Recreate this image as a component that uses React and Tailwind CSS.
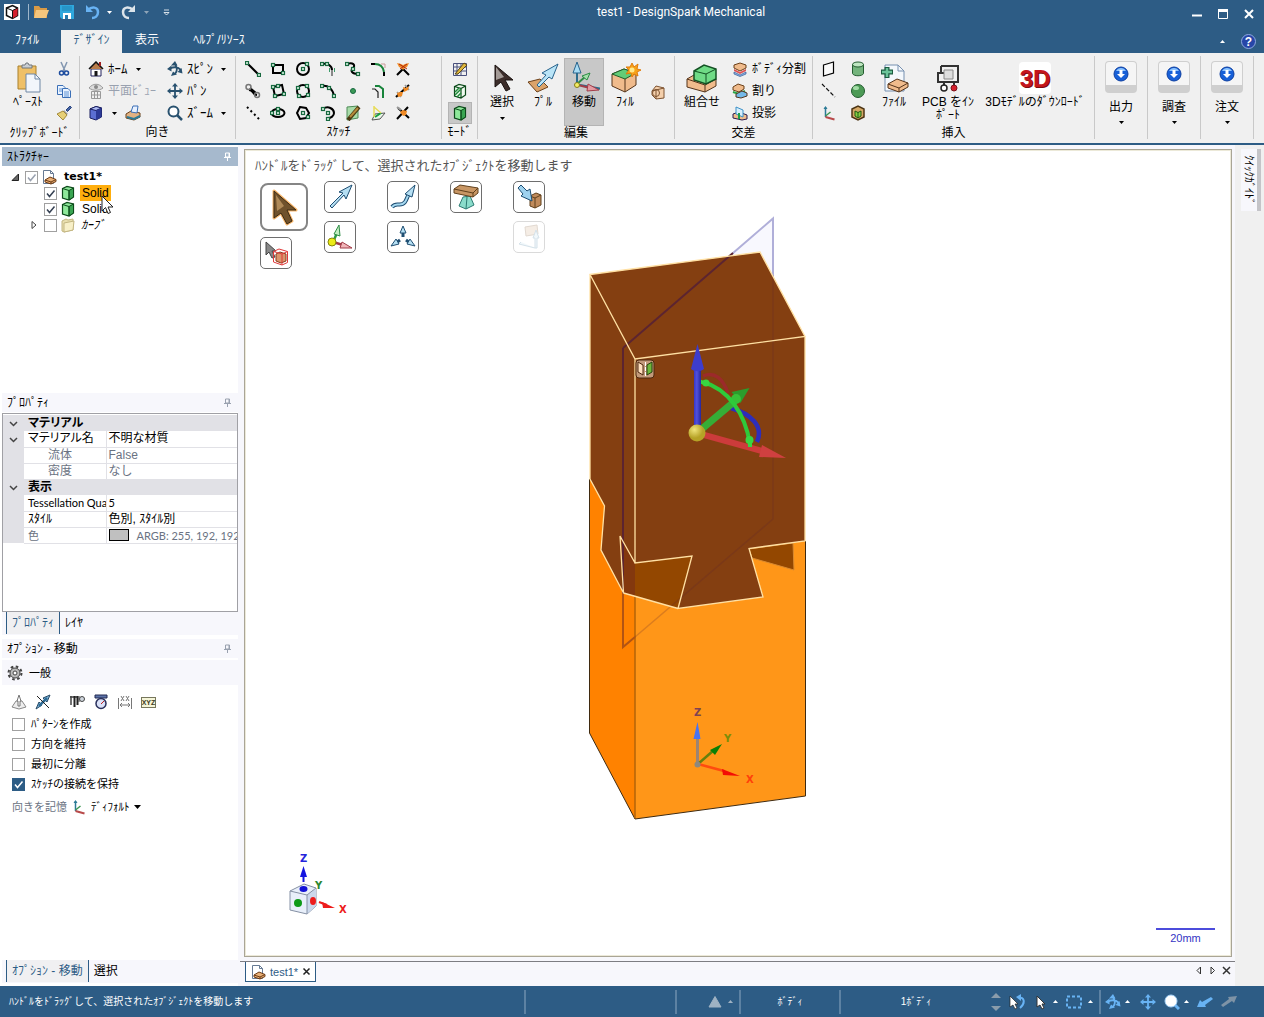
import { useState } from "react";

function Icon({ size = 16, className = "", children }) {
    return (
        <svg width={size} height={size} viewBox={`0 0 ${size} ${size}`} className={`shrink-0 ${className}`} fill="none" aria-hidden="true">
            {children}
        </svg>
    );
}

function Caret({ up, className = "" }) {
    return (
        <svg width="5" height="3" viewBox="0 0 5 3" className={`shrink-0 ${className}`} fill="currentColor" aria-hidden="true">
            <path d={up ? "M0 3h5L2.5 0z" : "M0 0h5L2.5 3z"}/>
        </svg>
    );
}

// green grip square used by the sketch icons
function Grips({ points }) {
    return points.map(([x, y]) => (
        <rect key={`${x}-${y}`} x={x - 1.5} y={y - 1.5} width="3" height="3" fill="#d8f0e0" stroke="#17693f" strokeWidth="1.2"/>
    ));
}

function CubeIcon({ className }) {
    return (
        <Icon className={className}>
            <path d="M2.5 3.500 7 1.500l6.500 1.500v9L9 15l-6.500-2z" fill="#8ee89a" stroke="#0c4a1a" strokeWidth="1.2"/>
            <path d="M9 5.500 13.500 3v9L9 15z" fill="#3aa552" stroke="#0c4a1a"/>
            <path d="M2.500 3.500 9 5.500V15" stroke="#0c4a1a"/>
        </Icon>
    );
}

function FileIcon() {
    return (
        <Icon>
            <path d="M2.500 1.500h7l3 3v10h-10z" fill="#fff" stroke="#667a94"/>
            <path d="M9.500 1.500v3h3" stroke="#667a94"/>
            <path d="m4 11 5-3 6 2.500v2L10 15l-6-2z" fill="#e9b077" stroke="#6b3a14"/>
            <path d="m4 11 6 2 5-2.500M10 13v2" stroke="#6b3a14"/>
        </Icon>
    );
}

function SpinPaths({ color }) {
    return (
        <>
            <path d="M3 7.500c4-2 8-1.500 11 1.500M8 3c2.500 3.500 2.500 7 0 10" stroke={color} strokeWidth="1.8"/>
            <path d="M4 4.500 8 0l2.500 4.500zM0 8l4.500-3.500v6zM15.500 12.500l-5-1.500 4-4zM4 15l2-4.500 4 3z" fill={color}/>
        </>
    );
}

function MovePaths({ color }) {
    return (
        <>
            <path d="M8 2v12M2 8h12" stroke={color} strokeWidth="1.8"/>
            <path d="M8 0 5 3.500h6zM8 16l-3-3.500h6zM0 8l3.500-3v6zM16 8l-3.500-3v6z" fill={color}/>
        </>
    );
}

function AxesIcon() {
    return (
        <Icon>
            <path d="M4.500 12V2" stroke="#2b7a96" strokeWidth="1.5"/>
            <path d="m4.500 11 5-4" stroke="#3b9651" strokeWidth="1.5"/>
            <path d="m4.500 12 9 2.500" stroke="#b84a4a" strokeWidth="2"/>
            <path d="M2.500 4 4.500 1l2 3z" fill="#2b7a96"/>
        </Icon>
    );
}

const sketchTools = [
    { name: "線", art: <><path d="m2 2 11 11" stroke="#000" strokeWidth="2"/><Grips points={[[2, 2], [14, 14]]}/></> },
    { name: "長方形", art: <><path d="M3 4h10v8H3z" stroke="#000" strokeWidth="2"/><Grips points={[[3, 4], [13, 12]]}/></> },
    { name: "円", art: <><circle cx="8" cy="8" r="6" stroke="#000" strokeWidth="2"/><Grips points={[[8, 8], [12, 3]]}/></> },
    { name: "接円弧", art: <><path d="M2 3c6-1 10 2 10 6" stroke="#000" strokeWidth="2"/><path d="M12 9v6" stroke="#888" strokeWidth="2"/><path d="M9.500 7v4M14.500 7v4" stroke="#3a9a68"/><Grips points={[[2, 3], [7, 3]]}/></> },
    { name: "スプライン", art: <><path d="M2 3c6-2 9 1 6 4s-1 6 5 6" stroke="#000" strokeWidth="2"/><Grips points={[[2, 3], [8, 8], [13, 13]]}/></> },
    { name: "角を丸くする", art: <><path d="M1 3h4M14 11v4" stroke="#000" strokeWidth="2"/><path d="M5 3c5 0 8 2 9 8" stroke="#18843b" strokeWidth="2"/><path d="M11 3h4v4" stroke="#c99"/></> },
    { name: "トリム", art: <><path d="M2 14 8 8l6 6" stroke="#000" strokeWidth="2"/><path d="m2 2 4 1 2 1 2-1 4-1-2 4-2 1-2 2-2-2-2-1z" fill="#f08a24"/><path d="m4 3 8 5M12 3 5 8" stroke="#b02a10"/></> },
    { name: "接線", art: <><path d="M4 7c5 0 2 4 8 5" stroke="#000" strokeWidth="2"/><path d="m5 5 6 5" stroke="#000" strokeWidth="2"/><circle cx="3.5" cy="4" r="2.5" stroke="#777" strokeWidth="1.5"/><circle cx="12" cy="12" r="2.5" stroke="#777" strokeWidth="1.5"/></> },
    { name: "3点長方形", art: <><path d="m3 4 9-2 2 9-9 2z" stroke="#000" strokeWidth="2"/><Grips points={[[3, 4], [8, 3], [5, 13], [14, 11]]}/></> },
    { name: "3点円", art: <><circle cx="8" cy="8" r="6" stroke="#000" strokeWidth="2"/><Grips points={[[3, 5], [12, 3], [4, 13], [13, 12]]}/></> },
    { name: "3点円弧", art: <><path d="M2 3c6-1 11 3 12 10" stroke="#000" strokeWidth="2"/><Grips points={[[2, 3], [9, 5], [14, 13]]}/></> },
    { name: "点", art: <circle cx="8" cy="8" r="2.5" fill="#3c9a56" stroke="#17693f"/> },
    { name: "オフセット", art: <><path d="M2 6h3l3 3v6" stroke="#222" strokeWidth="1.2"/><path d="M5 3h4l4 3v9" stroke="#18843b" strokeWidth="2"/></> },
    { name: "分割", art: <><path d="m1 14 13-12" stroke="#000" strokeWidth="2"/><path d="m10 2 4 5M2 9l4 5" stroke="#999" strokeWidth="1.5"/><path d="m8 4 3 1 3-2-1 4-4 2zM2 10l3-1h3l-1 4-4 1z" fill="#f08a24"/></> },
    { name: "補助線", art: <path d="m2 2 12 12" stroke="#000" strokeWidth="2" strokeDasharray="2 3"/> },
    { name: "楕円", art: <><ellipse cx="8" cy="8" rx="6.5" ry="4" stroke="#000" strokeWidth="2"/><Grips points={[[8, 8], [8, 4], [2, 8]]}/></> },
    { name: "多角形", art: <><path d="m5 2 6 1 3 5-3 5-6 1-3-6z" stroke="#000" strokeWidth="2"/><Grips points={[[8, 8], [13, 12]]}/></> },
    { name: "スイープ円弧", art: <><path d="M3 4c5-4 11 0 11 4 0 3-3 5-6 5" stroke="#000" strokeWidth="2"/><Grips points={[[3, 4], [8, 8], [8, 14]]}/></> },
    { name: "面カーブ", art: <><path d="m2 2 11-1v12L2 15z" fill="#a8dba8" stroke="#4f8c58"/><path d="M3 15 14 2" stroke="#4a3a12" strokeWidth="4"/><path d="M5 12 13 3" stroke="#b58a3a" strokeWidth="2"/></> },
    { name: "投影", art: <><path d="M5 9 15 8l-5 6-8 1z" fill="#eaf6ea" stroke="#555"/><path d="m5 12 6-4" stroke="#18a040" strokeWidth="2"/><path d="M4 1v11M4 2l7 6" stroke="#e8dc58" strokeWidth="1.5"/></> },
    { name: "曲げ", art: <><path d="m3 3 11 10M2 14 13 2" stroke="#000" strokeWidth="2"/><path d="m2 2 4 3" stroke="#999" strokeWidth="2"/><path d="m5 7 3-2 4 1-1 4-3 1z" fill="#f08a24"/></> }
];

function MenuButton({ icon, label, caret, disabled, size = "text-[13px]" }) {
    return (
        <button disabled={disabled} className={`flex h-[22px] items-center gap-1 whitespace-nowrap leading-4 disabled:text-gray-400 ${size}`}>
            {icon}
            <span>{label}</span>
            {caret && <Caret className="ml-1"/>}
        </button>
    );
}

function BigButton({ icon, label, caret, active, className = "w-10" }) {
    return (
        <button className={`flex h-[68px] flex-col items-center pt-1 text-[12px] leading-[13px] ${active ? "bg-[#c8c8c8] outline outline-[#b4b4b4] -outline-offset-1" : ""} ${className}`}>
            <span className="flex h-8 items-center">{icon}</span>
            <span className="mt-0.5">{label}</span>
            {caret && <Caret className="mt-2"/>}
        </button>
    );
}

function Group({ label, className = "", children }) {
    return (
        <section className={`flex shrink-0 flex-col border-r border-[#c9c9c9] ${className}`}>
            <div className="flex flex-1 items-start pt-0.5">{children}</div>
            <h2 className="text-center text-[12px] leading-[14px]">{label}</h2>
        </section>
    );
}

function TitleBar() {
    return (
        <header className="flex h-7 items-center bg-[#2d5c85] pb-1 text-white">
            <div className="flex flex-1 items-center gap-2 pl-1">
                <Icon className="bg-white">
                    <path d="m2.500 4 6-2.500 5 2.500v7.500l-5 3-6-3z" fill="#fff" stroke="#111" strokeWidth="1.5"/>
                    <path d="m8.500 6.500 5-2.500v7.500l-5 3z" fill="#d5202c"/>
                    <path d="m2.500 4 6 2.500 5-2.500M8.500 6.500v8" stroke="#111"/>
                </Icon>
                <span className="h-4 w-px bg-[#9fb6ca]"></span>
                <button aria-label="開く" className="-ml-1"><Icon>
                    <path d="M1 2h5l1.500 2H14v10H1z" fill="#d99a45"/><path d="M3 6h13l-3 8H1z" fill="#f5c67d"/>
                </Icon></button>
                <button aria-label="保存" className="ml-0.5"><Icon>
                    <path d="M1 1h14v14H3l-2-2z" fill="#2ea7dd"/><path d="M4 9h8v6H4z" fill="#fff"/><path d="M6 11h3v4H6z" fill="#2279ad"/><path d="M3 2h10v5H3z" fill="#2796c9"/>
                </Icon></button>
                <button aria-label="元に戻す" className="flex items-center gap-1.5"><Icon className="ml-0.5">
                    <path d="M3 6c4-4 10-3 10 2 0 4-3 6-6 6" stroke="#68b3f4" strokeWidth="2.5"/><path d="M1 1v7h7z" fill="#68b3f4"/>
                </Icon><Caret/></button>
                <button aria-label="やり直し" className="flex items-center gap-2"><Icon>
                    <path d="M13 6C9 2 3 3 3 8c0 4 3 6 6 6" stroke="#dce4ea" strokeWidth="2.5"/><path d="M15 1v7H8z" fill="#dce4ea"/>
                </Icon><Caret className="text-[#8fa5b8]"/></button>
                <button aria-label="クイックアクセス" className="ml-1.5"><Icon size={7}><path d="M1 1h5M1 3.500h5L3.500 6z" stroke="#fff" strokeWidth=".8"/></Icon></button>
            </div>
            <h1 className="pl-[104px] text-center font-['Roboto',sans-serif] text-[12px] leading-4">test1 - DesignSpark Mechanical</h1>
            <div className="flex flex-1 items-center justify-end gap-4 pr-[10px] pt-1">
                <button aria-label="最小化"><Icon size={10}><path d="M0 6.500h10" stroke="#fff" strokeWidth="2"/></Icon></button>
                <button aria-label="最大化"><Icon size={10}><path d="M.5 1v8.500h9V1" stroke="#fff"/><path d="M0 1.500h10" stroke="#fff" strokeWidth="3"/></Icon></button>
                <button aria-label="閉じる"><Icon size={10}><path d="m1 1 8 8M9 1 1 9" stroke="#fff" strokeWidth="2"/></Icon></button>
            </div>
        </header>
    );
}

function RibbonTabs() {
    const tabs = [
        { label: "ﾌｧｲﾙ", width: "w-[54px]" },
        { label: "ﾃﾞｻﾞｲﾝ", width: "w-[61px] ml-[7px]", active: true },
        { label: "表示", width: "w-[50px]" },
        { label: "ﾍﾙﾌﾟ/ﾘｿｰｽ", width: "w-[94px]" }
    ];

    return (
        <nav className="flex h-[25px] items-end bg-[#2d5c85] text-[12px] leading-4 text-white">
            {tabs.map(tab => (
                <button key={tab.label} className={`h-[23px] whitespace-nowrap pb-1 ${tab.width} ${tab.active ? "bg-[#f0f0f0] text-[#2d5c85]" : ""}`}>{tab.label}</button>
            ))}
            <div className="ml-auto flex items-center gap-4 pb-1 pr-2">
                <button aria-label="リボンを最小化"><Caret up/></button>
                <button aria-label="ヘルプ" className="flex h-[15px] w-[15px] items-center justify-center rounded-full border border-[#8fa9e0] bg-[#2746a8] text-[12px] font-bold leading-3">?</button>
            </div>
        </nav>
    );
}

function OutputGroup({ label }) {
    return (
        <button className="flex w-[53px] shrink-0 flex-col items-center border-r border-[#c9c9c9] pt-[5px] text-[12px] leading-4">
            <span className="flex h-8 w-8 justify-center rounded border border-[#cfcfcf] border-b-8 bg-[#f5f5f5] pt-1">
                <Icon>
                    <circle cx="8" cy="8" r="7" fill="#1760d8" stroke="#0c3ea0"/>
                    <path d="M3 5c2-4 8-4 10 0z" fill="#8ec5ff"/>
                    <path d="M6.500 4h3v4H12l-4 4-4-4h2.500z" fill="#fff"/>
                </Icon>
            </span>
            <span className="mt-1.5">{label}</span>
            <Caret className="mt-1.5"/>
        </button>
    );
}

function Ribbon() {
    return (
        <div className="flex h-[92px] overflow-hidden border-b-2 border-[#2d5c85] bg-[#f0f0f0] pb-1 pt-[3px]">
            <Group label="ｸﾘｯﾌﾟﾎﾞｰﾄﾞ" className="w-20">
                <BigButton className="ml-2 w-10" label="ﾍﾟｰｽﾄ" icon={
                    <Icon size={32}>
                        <path d="M6 4h18v23H6z" fill="#efc067" stroke="#a9802d"/>
                        <path d="M10 6V3h3l1-2h2l1 2h3v3z" fill="#c8cdd2" stroke="#71767c"/>
                        <path d="M14 12h9l5 5v13H14z" fill="#f2f6fb" stroke="#6f87a4"/>
                        <path d="M23 12v5h5" stroke="#6f87a4"/>
                    </Icon>
                }/>
                <div className="ml-2 flex flex-col">
                    <button aria-label="切り取り" className="flex h-[22px] items-center"><Icon><path d="M5 1l4 9M11 1 7 10" stroke="#8296b0" strokeWidth="1.5"/><circle cx="5.5" cy="12" r="2" stroke="#1b4b9e" strokeWidth="1.5"/><circle cx="10.5" cy="12" r="2" stroke="#1b4b9e" strokeWidth="1.5"/></Icon></button>
                    <button aria-label="コピー" className="flex h-[22px] items-center"><Icon><path d="M1.500 2.500H7l2 2v7H1.500z" fill="#eaf3ff" stroke="#3b6fb6"/><path d="M6.500 5.500H12l2.500 2.500v6.500h-8z" fill="#eaf3ff" stroke="#3b6fb6"/><path d="M8 9h5M8 11h5M8 13h5M3 6h3M3 8h3" stroke="#5c92d4"/></Icon></button>
                    <button aria-label="書式のコピー" className="flex h-[22px] items-center"><Icon><path d="m10 5 4-4 1.500 1.500-4 4z" fill="#4565a5" stroke="#2a437c"/><path d="m8 5 4 4-2 1-3-3z" fill="#999"/><path d="m7 6 4 4-4 5-6-6z" fill="#e6cf77" stroke="#a38a3a"/></Icon></button>
                </div>
            </Group>

            <Group label="向き" className="w-[156px]">
                <div className="ml-2 w-[79px]">
                    <MenuButton label="ﾎｰﾑ" caret icon={<Icon><path d="M3 8h10v7H3z" fill="#fff" stroke="#20205c"/><path d="m1 8 7-7 7 7" fill="#b97c4a" stroke="#111" strokeWidth="1.5"/><path d="M6.500 10h3v5h-3z" fill="#161616"/><path d="M12 1v4" stroke="#a02020" strokeWidth="2"/></Icon>}/>
                    <MenuButton label="平面ﾋﾞｭｰ" size="text-[12px]" disabled icon={<Icon><path d="M1 5c4-5 10-5 14 0-4 3-10 3-14 0z" fill="#ddd" stroke="#999"/><circle cx="8" cy="4" r="2" fill="#888"/><path d="M3.500 8.500h9v7h-9zM3.500 12h9M6.500 8.500v7M9.500 8.500v7" stroke="#999"/></Icon>}/>
                    <div className="flex h-[22px] items-center gap-2">
                        <button className="flex items-center gap-2" aria-label="ビュー">
                            <Icon><path d="m2 4 6-2.500L13.500 3v9L8 15l-6-2z" fill="#5b6fd2" stroke="#1a1f5e"/><path d="m2 4 6 1.500L13.500 3 8 1.500z" fill="#aebcf5" stroke="#1a1f5e"/><path d="m8 5.500 5.500-2.500v9L8 15z" fill="#2c3a96"/></Icon>
                            <Caret/>
                        </button>
                        <button aria-label="面ビュー"><Icon><path d="m1 9 5-3 9 2v4l-6 3-8-2z" fill="#e3b282" stroke="#6b4019"/><path d="M8 1h5l-1 7-6-1z" fill="#e6f0ff" stroke="#3b6fb6"/><path d="m2 12 7 2 6-3" stroke="#2b7a96" strokeWidth="2"/></Icon></button>
                    </div>
                </div>
                <div>
                    <MenuButton label="ｽﾋﾟﾝ" caret icon={<Icon><SpinPaths color="#28516f"/></Icon>}/>
                    <MenuButton label="ﾊﾟﾝ" icon={<Icon><MovePaths color="#28516f"/></Icon>}/>
                    <MenuButton label="ｽﾞｰﾑ" caret icon={<Icon><circle cx="6.5" cy="6.5" r="5" fill="#fff" stroke="#28516f" strokeWidth="2"/><path d="m10 10 5 5" stroke="#28516f" strokeWidth="2.5"/></Icon>}/>
                </div>
            </Group>

            <Group label="ｽｹｯﾁ" className="w-[206px]">
                <div className="ml-1 grid grid-cols-7">
                    {sketchTools.map(tool => (
                        <button key={tool.name} aria-label={tool.name} className="flex h-[22px] w-[25px] items-center justify-center"><Icon>{tool.art}</Icon></button>
                    ))}
                </div>
            </Group>

            <Group label="ﾓｰﾄﾞ" className="w-9">
                <div className="mx-auto flex flex-col">
                    <button aria-label="スケッチモード" className="flex h-[22px] w-6 items-center justify-center"><Icon><path d="M1.500 2.500h13v12h-13zM1.500 6h13M1.500 10h13M5 2.500v12M9 2.500v12" stroke="#49507c"/><path d="m3 13 9-11 3 2-9 9z" fill="#e0b73d" stroke="#5b4a1a"/></Icon></button>
                    <button aria-label="断面モード" className="flex h-[22px] w-6 items-center justify-center"><Icon><path d="M2.500 3.500 7 1.500l6.500 1.500v9L9 15l-6.500-2zM2.500 3.500 9 5.500V15M9 5.500 13.500 3" fill="#effaef" stroke="#0c4a1a" strokeWidth="1.2"/><path d="m3 9 4-4M3 12l6-6M5 14l4-4" stroke="#208c3a" strokeWidth="1.5"/></Icon></button>
                    <button aria-label="3Dモード" className="flex h-[22px] w-6 items-center justify-center border border-[#b4b4b4] bg-[#c8c8c8]"><CubeIcon/></button>
                </div>
            </Group>

            <Group label="編集" className="w-[197px]">
                <div className="ml-1 flex gap-px">
                    <BigButton label="選択" caret icon={<Icon size={32}><path d="M9 3v22l6-5 5 9 4-2-5-9h8z" fill="#3c2d2a" stroke="#1a1210"/><path d="M10 5v13l8-3z" fill="#a39a96"/></Icon>}/>
                    <BigButton label="ﾌﾟﾙ" icon={<Icon size={32}><path d="m1 20 12-3 8 8-11 5z" fill="#dba36a" stroke="#6b4019"/><path d="M10 23 19 13l-4-2L31 2l-6 15-3-2-10 10z" fill="#b9e4f7" stroke="#28638c"/></Icon>}/>
                    <BigButton label="移動" active icon={<Icon size={32}><path d="M9 22V6M12 23l22 4" stroke="#2c6c8c" strokeWidth="2"/><path d="M9 0 5 11h8z" fill="#a9dcf4" stroke="#28638c"/><path d="m9 22 9-8" stroke="#2d8c45" strokeWidth="2"/><path d="m22 11-8 3 5 4z" fill="#a5e0ac" stroke="#2d8c45"/><path d="m10 23 12 3" stroke="#a23c48" strokeWidth="2"/><path d="m20 22 11 6-12 1z" fill="#e59aa2" stroke="#a23c48"/><circle cx="9" cy="23" r="2.5" fill="#f3ee65" stroke="#877c1c"/></Icon>}/>
                    <BigButton label="ﾌｨﾙ" icon={<Icon size={32}><path d="m3 12 12-5 12 4v12l-11 7-13-6z" fill="#f0bb8c" stroke="#55341b"/><path d="m3 12 12-5 12 4-11 6z" fill="#63cc77" stroke="#1f602b"/><path d="M16 17v13" stroke="#55341b"/><path d="m23 1 2 4 4-3-1 5 4 1-4 2 1 4-4-2-2 3-1-4-5 1 3-4-3-3h4z" fill="#f7a319" stroke="#e07b0b"/><circle cx="23" cy="8" r="2.5" fill="#ffe88a"/></Icon>}/>
                    <button aria-label="ブレンド" className="ml-1 mt-[26px] self-start"><Icon><path d="m2 7 4-5 8 2v10l-8 1-4-4z" fill="#f4cfab" stroke="#7c5230"/><path d="m6 6 8-2M6 6v9M2 7l4-1" stroke="#7c5230"/><circle cx="6" cy="9" r="3.5" stroke="#7c5230"/></Icon></button>
                </div>
            </Group>

            <Group label="交差" className="w-[138px]">
                <BigButton className="ml-[7px] w-10" label="組合せ" icon={<Icon size={32}><path d="m1 17 7-4 22 4v7l-11 6-18-5z" fill="#f0bb8c" stroke="#55341b"/><path d="M1 17 19 23l11-6M19 23v7" stroke="#55341b"/><path d="m8 9 10-6 12 4v10l-10 5-12-4z" fill="#6fdb86" stroke="#135123" strokeWidth="1.5"/><path d="m8 9 12 3 10-5M20 12v10" stroke="#135123"/></Icon>}/>
                <div className="ml-[10px]">
                    <MenuButton label="ﾎﾞﾃﾞｨ分割" size="text-[12px]" icon={<Icon><path d="m2 4 6-2 6 2v3l-6 3-6-3z" fill="#f0bb8c" stroke="#6b4019"/><path d="m2 8 6 3 6-3v2l-6 3-6-3z" fill="#e05353"/><path d="m2 11 6 3 6-3v2l-6 2.500L2 13z" fill="#8db4e8" stroke="#365b94" strokeWidth=".7"/></Icon>}/>
                    <MenuButton label="割り" size="text-[12px]" icon={<Icon><path d="m1 4 5-3 6 2v3l-5 3-6-2z" fill="#f0bb8c" stroke="#6b4019"/><path d="m1 9 6 2 6-3" stroke="#29a447" strokeWidth="2"/><path d="m4 11 6-3 5 2v3l-6 2-5-1z" fill="#74b9e8" stroke="#54351d"/></Icon>}/>
                    <MenuButton label="投影" size="text-[12px]" icon={<Icon><path d="m1 9 6-2 8 3v4l-5 1-9-2z" fill="#f0bb8c" stroke="#2b1a4e"/><path d="M4 2v7l7 3V5z" fill="#d8eefb" stroke="#3a90c8"/><path d="M7 8v6" stroke="#1ba04b" strokeWidth="2"/></Icon>}/>
                </div>
            </Group>

            <Group label="挿入" className="w-[282px]">
                <div className="ml-2 grid grid-cols-2 gap-x-[13px]">
                    <button aria-label="平面" className="flex h-[22px] items-center"><Icon><path d="m2.500 4 10-3v11l-10 3z" fill="#fafafa" stroke="#000" strokeWidth="1.2"/></Icon></button>
                    <button aria-label="円柱" className="flex h-[22px] items-center"><Icon><path d="M2.500 3.500v9c1 3 10 3 11 0v-9z" fill="#74b47c" stroke="#245c30"/><ellipse cx="8" cy="3.5" rx="5.5" ry="2.5" fill="#bfe6c1" stroke="#245c30"/></Icon></button>
                    <button aria-label="軸" className="flex h-[22px] items-center"><Icon><path d="m1 1 13 13" stroke="#111" strokeWidth="1.2" strokeDasharray="4 2"/></Icon></button>
                    <button aria-label="球" className="flex h-[22px] items-center"><Icon><circle cx="8" cy="8" r="6.5" fill="#4c9a55" stroke="#245c30"/><ellipse cx="6" cy="5" rx="3" ry="2" fill="#a2dca6"/></Icon></button>
                    <button aria-label="原点" className="flex h-[22px] items-center"><AxesIcon/></button>
                    <button aria-label="シェル" className="flex h-[22px] items-center"><Icon><path d="m2 4 6-3 6 3v8l-6 3-6-3z" fill="#d4a765" stroke="#4d3515" strokeWidth="1.5"/><path d="m5 6 3 1.500L11 6v5l-3 2-3-2zM8 7v6" fill="#87d043" stroke="#1e5a12"/></Icon></button>
                </div>
                <BigButton className="ml-1.5 w-11" label="ﾌｧｲﾙ" icon={<Icon size={32}><path d="M7 3h13l6 6v20H7z" fill="#f4f8fc" stroke="#7790b0"/><path d="M20 3v6h6" stroke="#7790b0"/><path d="M9 5v11M3 10h12" stroke="#1d5c40" strokeWidth="5"/><path d="M9 6v9M4 10h10" stroke="#6bc49a" strokeWidth="2.5"/><path d="m10 22 9-5 11 4v4l-9 5-11-4z" fill="#f0bb8c" stroke="#55341b"/><path d="m10 22 11 4 9-5M21 26v4" stroke="#55341b"/></Icon>}/>
                <BigButton className="ml-1 w-14" label={<>PCB をｲﾝ<br/>ﾎﾟｰﾄ</>} icon={<Icon size={32}><path d="M9 4h17v16H6V11h8" stroke="#333" strokeWidth="2"/><path d="M9 4v7" stroke="#333" strokeWidth="2"/><path d="M12 8h9v9h-9z" fill="#ddd" stroke="#888"/><path d="M12 20v4M22 20v4" stroke="#333" strokeWidth="2"/><circle cx="12" cy="26" r="3" fill="#fff" stroke="#222" strokeWidth="1.5"/><circle cx="22" cy="26" r="3" fill="#d5202c" stroke="#7d111b"/></Icon>}/>
                <BigButton className="ml-1.5 w-[106px] whitespace-nowrap" label="3Dﾓﾃﾞﾙのﾀﾞｳﾝﾛｰﾄﾞ" icon={<span className="flex h-8 w-8 items-center justify-center rounded bg-white text-[24px] font-bold text-[#c4161c] [text-shadow:1px_1px_0_#7d0a10]">3D</span>}/>
            </Group>

            <OutputGroup label="出力"/>
            <OutputGroup label="調査"/>
            <OutputGroup label="注文"/>
        </div>
    );
}

function Pin() {
    return <Icon size={9}><path d="M2.500 1h4v4h-4zM1 5.500h7M4.500 5.500V9M6 1v4" stroke="currentColor"/></Icon>;
}

function PanelHeader({ title, active }) {
    return (
        <div className={`flex h-[19px] items-center justify-between pl-[5px] pr-1.5 text-[12px] leading-4 ${active ? "bg-[#a6b9cd]" : "bg-[#f7f7fc]"}`}>
            <h2>{title}</h2>
            <button aria-label={`${title}を固定`} className={active ? "text-white" : "text-gray-400"}><Pin/></button>
        </div>
    );
}

function Checkbox({ id, label, defaultChecked, solid, faded }) {
    return (
        <span className="relative flex h-[13px] w-[13px] shrink-0">
            <input id={id} aria-label={label} type="checkbox" defaultChecked={defaultChecked} className={`peer h-[13px] w-[13px] appearance-none border border-[#a0a0a0] bg-white ${solid ? "checked:border-[#2d5c85] checked:bg-[#2d5c85]" : ""}`}/>
            <svg width="13" height="13" viewBox="0 0 13 13" fill="none" strokeWidth="1.5" className={`pointer-events-none invisible absolute inset-0 peer-checked:visible ${solid ? "stroke-white" : faded ? "stroke-gray-400" : "stroke-gray-700"}`}>
                <path d="m3 6.500 2.500 3 5-6"/>
            </svg>
        </span>
    );
}

function StructurePanel() {
    return (
        <section className="h-[246px]">
            <PanelHeader title="ｽﾄﾗｸﾁｬｰ" active/>
            <ul className="pt-[3px] text-[12px] leading-4">
                <li className="flex h-4 items-center gap-[3px] pl-2">
                    <button aria-label="折りたたむ" className="mr-0.5"><Icon size={10}><path d="M8.500 2v6.500H2z" fill="#666" stroke="#222"/></Icon></button>
                    <Checkbox label="test1" defaultChecked faded/>
                    <FileIcon/>
                    <span className="ml-1 font-['DejaVu_Sans',sans-serif] text-[11px] font-bold">test1*</span>
                </li>
                <li className="relative flex h-4 items-center gap-[3px] pl-[42px]">
                    <Checkbox label="Solid 1" defaultChecked/>
                    <CubeIcon/>
                    <span className="ml-px bg-[#ffae0d] px-0.5">Solid</span>
                    <svg width="13" height="20" viewBox="0 0 13 20" className="absolute left-[99px] top-2.5 z-10">
                        <path d="M1 1v15l3.500-3.500L7 18.500l2.500-1L7 12h5z" fill="#fff" stroke="#222"/>
                    </svg>
                </li>
                <li className="flex h-4 items-center gap-[3px] pl-[42px]">
                    <Checkbox label="Solid 2" defaultChecked/>
                    <CubeIcon/>
                    <span className="ml-px px-0.5">Solid</span>
                </li>
                <li className="flex h-4 items-center gap-[3px] pl-[27px]">
                    <button aria-label="展開" className="mr-0.5"><Icon size={10}><path d="M3 1.500 7 5 3 8.500z" fill="#fff" stroke="#444"/></Icon></button>
                    <Checkbox label="カーブ"/>
                    <Icon><path d="m2 4 4-2 2 1 5-1v11l-9 2-2-1z" fill="#e9dfae" stroke="#c3b682"/><path d="m4 6 10-2-1 9-9 2z" fill="#f8f0c8" stroke="#c3b682"/></Icon>
                    <span className="ml-0.5 italic">ｶｰﾌﾞ</span>
                </li>
            </ul>
        </section>
    );
}

const properties = [
    { name: "マテリアル", section: true },
    { name: "マテリアル名", value: "不明な材質", chevron: true },
    { name: "流体", value: "False", child: true },
    { name: "密度", value: "なし", child: true },
    { name: "表示", section: true },
    { name: "Tessellation Qua", value: "5", latin: true },
    { name: "ｽﾀｲﾙ", value: "色別, ｽﾀｲﾙ別" },
    { name: "色", value: "ARGB: 255, 192, 192", swatch: true, latin: true }
];

function Chevron() {
    return <Icon size={9} className="mx-auto"><path d="m1 3 3.500 3.500L8 3" stroke="#444" strokeWidth="1.5"/></Icon>;
}

function PropertyRow({ row }) {
    const tone = row.child || row.swatch ? "text-gray-500" : "";
    const font = row.latin ? "font-['Lato','Noto_Sans_CJK_JP',sans-serif] text-[11px]" : "";

    return (
        <tr className={`h-4 ${tone} ${font}`}>
            <td className="bg-[#e1e1e6]">{row.chevron && <Chevron/>}</td>
            <th className={`overflow-hidden whitespace-nowrap border-b border-r border-[#e1e1e6] font-normal [font-feature-settings:'palt'] ${row.child ? "pl-6" : "pl-1"}`}>{row.name}</th>
            <td className="overflow-hidden whitespace-nowrap border-b border-[#e1e1e6] pl-0.5">
                <span className="flex items-center gap-2">
                    {row.swatch && <span className="h-3 w-5 shrink-0 border border-black bg-[#c0c0c0]"></span>}
                    {row.value}
                </span>
            </td>
        </tr>
    );
}

function PropertiesPanel() {
    return (
        <section>
            <PanelHeader title="ﾌﾟﾛﾊﾟﾃｨ"/>
            <div className="mt-px h-[199px] overflow-hidden border border-[#a0a0a5] bg-white pt-px">
                <table className="w-full table-fixed border-collapse text-left text-[12px] leading-[15px]">
                    <colgroup>
                        <col className="w-[21px]"/>
                        <col className="w-[82px]"/>
                        <col/>
                    </colgroup>
                    <tbody>
                        {properties.map(row => row.section ? (
                            <tr key={row.name} className="h-4 bg-[#e1e1e6]">
                                <td><Chevron/></td>
                                <th colSpan="2" className="pl-1 font-bold [font-feature-settings:'palt']">{row.name}</th>
                            </tr>
                        ) : <PropertyRow key={row.name} row={row}/>)}
                    </tbody>
                </table>
            </div>
            <PanelTabs tabs={["ﾌﾟﾛﾊﾟﾃｨ", "ﾚｲﾔ"]}/>
        </section>
    );
}

function PanelTabs({ tabs }) {
    const [current, setCurrent] = useState(tabs[0]);

    return (
        <div className="flex h-[23px] bg-[#f7f7fc] pl-1 text-[12px] leading-4">
            {tabs.map(tab => (
                <button key={tab} onClick={() => setCurrent(tab)} className={`h-[22px] px-[5px] ${tab === current ? "border-x border-[#2d5c85] bg-[#f0f0f2] text-[#2d5c85]" : ""}`}>{tab}</button>
            ))}
        </div>
    );
}

const moveOptions = [
    { id: "pattern", label: "ﾊﾟﾀｰﾝを作成" },
    { id: "direction", label: "方向を維持" },
    { id: "detach", label: "最初に分離" },
    { id: "sketch", label: "ｽｹｯﾁの接続を保持", checked: true }
];

function OptionsPanel() {
    return (
        <section className="mt-1 flex flex-1 flex-col">
            <PanelHeader title="ｵﾌﾟｼｮﾝ - 移動"/>
            <h3 className="mt-0.5 flex h-[25px] items-center gap-1.5 bg-[#f7f7fc] pl-[5px] text-[11px] leading-4">
                <Icon><circle cx="8" cy="8" r="6.5" stroke="#444" strokeWidth="2" strokeDasharray="2.6 2.5"/><circle cx="8" cy="8" r="5" fill="#bbb" stroke="#444"/><circle cx="8" cy="8" r="2" fill="#fff" stroke="#444"/></Icon>
                一般
            </h3>
            <div className="flex items-center gap-2 pb-1 pl-[9px] pt-[9px]">
                <button aria-label="直接移動"><Icon><path d="m1 13 4-6h6l4 6-7 2z" fill="#eee" stroke="#888"/><path d="m8 1-2 6h1v5h2V7h1z" fill="#fff" stroke="#777"/></Icon></button>
                <button aria-label="方向"><Icon><path d="m1 15 3-7 3 3zM15 1 8 4l4 4z" fill="#7fb4d8" stroke="#284a66"/><path d="m4 12 8-8" stroke="#2d6b96" strokeWidth="2.5"/><path d="m2 2 12 12" stroke="#222"/></Icon></button>
                <button aria-label="ルーラー" className="ml-[10px]"><Icon><path d="M2 2v9M1 3h8" stroke="#444" strokeWidth="1.5"/><path d="M5.500 2v11M8.500 2v9" stroke="#222" strokeWidth="2"/><path d="M10 2v6" stroke="#444"/><circle cx="13" cy="5" r="2.5" fill="#cfd6de" stroke="#444"/></Icon></button>
                <button aria-label="角度"><Icon><path d="M2 1h12v3H2z" fill="#5c73a8" stroke="#222b52"/><circle cx="8" cy="9.5" r="5" fill="#dbe2f8" stroke="#29305c" strokeWidth="1.5"/><path d="m8 10 3-3" stroke="#c02020"/></Icon></button>
                <button aria-label="寸法"><Icon><path d="M1.500 4v11M14.500 4v11M3 11h10M5 9l-2 2 2 2M11 9l2 2-2 2M4 2l3 5M7 2 4 7M9 2l3 5M12 2 9 7" stroke="#777"/></Icon></button>
                <button aria-label="座標" className="flex h-[11px] w-[15px] items-center justify-center border border-[#77775c] bg-[#f5f5d8] text-[7px] font-bold leading-none text-[#3a3a22]">XYZ</button>
            </div>
            <div className="flex flex-col pl-[10px] text-[11px] leading-5">
                {moveOptions.map(option => (
                    <label key={option.id} htmlFor={option.id} className="flex h-5 items-center gap-1.5">
                        <Checkbox id={option.id} defaultChecked={option.checked} solid/>
                        {option.label}
                    </label>
                ))}
                <div className="mt-[3px] flex h-5 items-center">
                    <span className="text-gray-500">向きを記憶</span>
                    <button className="ml-1 flex items-center gap-1"><AxesIcon/>ﾃﾞｨﾌｫﾙﾄ<svg width="7" height="4" viewBox="0 0 7 4"><path d="M0 0h7L3.500 4z"/></svg></button>
                </div>
            </div>
            <div className="mt-auto"><PanelTabs tabs={["ｵﾌﾟｼｮﾝ - 移動", "選択"]}/></div>
        </section>
    );
}

function GuideButton({ name, disabled, children }) {
    return (
        <button aria-label={name} disabled={disabled} className="flex h-8 w-8 items-center justify-center rounded-[5px] border border-[#6e6e6e] bg-white disabled:opacity-25">
            <svg width="28" height="28" viewBox="0 0 28 28" fill="none" className="shrink-0">{children}</svg>
        </button>
    );
}

function ToolGuides() {
    return (
        <div className="relative flex items-start pl-[15px] pt-1.5">
            <div className="flex w-16 flex-col items-start gap-1.5 pt-0.5">
                <button aria-label="選択ツール" className="flex h-12 w-12 items-center justify-center rounded-lg border-2 border-[#858585] bg-white">
                    <svg width="40" height="40" viewBox="0 0 40 40" className="shrink-0"><path d="M10 4v27l7-5 6 11 5-3-5-11h9z" fill="#7a5a30" stroke="#f5b469" strokeWidth="3" strokeLinejoin="round"/><path d="M10 4v27l7-5 6 11 5-3-5-11h9z" fill="#70522c" stroke="#3c2a12"/><path d="m12 8 1 16 7-5z" fill="#b08a58"/></svg>
                </button>
                <GuideButton name="オブジェクトを選択">
                    <path d="M4 3v13l3-3 3 6 3-1-3-6h4z" fill="#888" stroke="#444"/>
                    <path d="m14 15 4-2 6 2v7l-5 2-5-2z" fill="#d9956c" stroke="#8a3a1d"/>
                    <path d="M11.500 12.500 17 10l8.500 2.500v11L20 26l-8.500-3zM11.500 12.500 20 15l5.500-2.500M20 15v11" stroke="#e03a3a"/>
                </GuideButton>
            </div>
            <div className="grid grid-cols-[repeat(4,32px)] gap-x-[31px] gap-y-2">
                <GuideButton name="方向へ移動"><path d="M4 23 17 10l-4-1L26 2l-6 14-2-4L6 25z" fill="#b5dff3" stroke="#1f4e72"/></GuideButton>
                <GuideButton name="軌跡に沿って移動"><path d="M3 24c5-6 8 1 13-5 2-3 2-5 4-8" stroke="#1f4e72" strokeWidth="4"/><path d="M3 24c5-6 8 1 13-5 2-3 2-5 4-8" stroke="#a5d8f0" strokeWidth="2"/><path d="m26 2-10 9 7 3z" fill="#b5dff3" stroke="#1f4e72"/></GuideButton>
                <GuideButton name="支点"><path d="m11 14-4 9 7 3 8-4-4-9z" fill="#8adccb" stroke="#2c7a72"/><path d="m15 14-1 12" stroke="#2c7a72"/><path d="m2 6 6-4 18 3v5l-5 4L2 10z" fill="#c89664" stroke="#60401c"/><path d="m2 6 19 4 5-5M21 10v4" stroke="#60401c"/></GuideButton>
                <GuideButton name="アップツー"><path d="m15 13 6-3 5 2v10l-6 3-5-2z" fill="#c08b5c" stroke="#60401c"/><path d="m15 13 5 2 6-3M20 15v10" stroke="#60401c"/><path d="m3 5 3-3 6 6 3-2 2 12-11-5 2-2z" fill="#9ed2ef" stroke="#1f4e72"/></GuideButton>
                <GuideButton name="アンカー"><path d="m7 19 4-9" stroke="#2d9c45" strokeWidth="2.5"/><path d="m13 2-5 9 6 2z" fill="#c2edc2" stroke="#2d8c45"/><path d="m7 19 10 3" stroke="#a23c48" strokeWidth="2.5"/><path d="m16 19 10 6H14z" fill="#f0b5b9" stroke="#a23c48"/><circle cx="6" cy="19" r="4" fill="#ecec18" stroke="#88880a"/></GuideButton>
                <GuideButton name="放射状に移動"><path d="M14 14V8M11 17l-4 3M17 17l4 3" stroke="#1f4e72" strokeWidth="3"/><path d="m14 3-3 7h6zM2 23l5-7 3 5zM26 23l-5-7-3 5z" fill="#b5dff3" stroke="#1f4e72"/></GuideButton>
                <span></span>
                <GuideButton name="方向付け" disabled><path d="m10 4 12-2 1 9-12 2z" fill="#d9b999" stroke="#8c6c4c"/><path d="M20 25V15h-2l3-8 3 8h-2v10zM20 25 4 21l2-2" fill="#c8e4f2" stroke="#5a8caa"/></GuideButton>
            </div>
        </div>
    );
}

function Model() {
    return (
        <svg viewBox="245 150 986 806" preserveAspectRatio="xMinYMin meet" className="absolute inset-0 h-full w-full" fill="none">
            <defs>
                <linearGradient id="zShaft"><stop stopColor="#3737c8"/><stop offset=".4" stopColor="#5151de"/><stop offset="1" stopColor="#26269c"/></linearGradient>
                <radialGradient id="ball" cx=".35" cy=".3"><stop stopColor="#f1e57c"/><stop offset="1" stopColor="#b6a226"/></radialGradient>
            </defs>

            {/* construction plane, part above the body */}
            <path d="M623 348 773 218.500V519L623 647z" fill="#f8f8fe"/>
            <path d="M623 348 773 218.500V300" stroke="#b0afd9" strokeWidth="2"/>

            {/* lower solid */}
            <path d="M589.500 479v254L635 819V590l-12-60z" fill="#ff8200"/>
            <path d="m635 560 170.500-19v255L635 819z" fill="#ff9618"/>
            <path d="M589.500 479v254L635 819l170.500-23V541" stroke="#3f2a10"/>
            <path d="M635 596v222" stroke="#b36308" strokeWidth="1.5"/>

            {/* slots cut by the dovetail */}
            <path d="m635 563 57-7-14 52-43-12z" fill="#934700"/>
            <path d="m620 536 15 27v33l-11.500-3z" fill="#83380e"/>
            <path d="m749 549 44-6 1 27-42-12z" fill="#934700" stroke="#d98a30"/>

            {/* upper solid */}
            <path d="M590 274.500 760 252l45 84.500V541l-56 7.500 14 48.500-85 11.500 14-52.500-57 7-15-27 3.500 57L601 550l3.500-44L590 479z" fill="#843f11"/>
            <path d="m635 563 57-7-14 52.500-43-12.500z" fill="#934700"/>
            <path d="m623 348 110-95" stroke="#5c2430" strokeWidth="2"/>
            <path d="M623 348v245" stroke="#5c2430" strokeWidth="2"/>
            <path d="m635 637 138-118V275" stroke="#5c2430" strokeOpacity=".22" strokeWidth="1.5"/>
            <path d="M623 593v54l12-10" stroke="#b25413" strokeWidth="2"/>
            <path d="M590 274.500 760 252l45 84.500L635 359zM635 359v204l57-7-14 52.500 85-11.500-14-48.500 56-7.500V336.500M590 274.500V479l14.500 27-3.500 44 22.500 43-3.500-57 15 27M623.500 593l54.500 15.500" stroke="#ffe0a3" strokeWidth="1.3"/>

            {/* mirror badge */}
            <rect x="636" y="360" width="18" height="18" rx="3" fill="#c39a7c" stroke="#4c280f"/>
            <path d="m638 362 5 3v10l-5-3z" fill="#ffe0c0" stroke="#4c280f"/>
            <path d="m652 362-5 3v10l5-3z" fill="#6fb73c" stroke="#24420f"/>
            <path d="M645.500 362v15" stroke="#fff" strokeDasharray="4 1"/>

            {/* move handle */}
            <path d="M703 376c12-5 20 3 25 17" stroke="#9c2a2a" strokeWidth="3.5"/>
            <path d="M731 408c20 6 33 18 26 34" stroke="#2e2eba" strokeWidth="4.5"/>
            <path d="m697 433 38-32" stroke="#36ad36" strokeWidth="7"/>
            <path d="m749.500 388-18 4 9 11z" fill="#2c9c2c"/>
            <circle cx="736" cy="399" r="5" fill="#38c038"/>
            <path d="m697 433 65 18" stroke="#cc3b3b" strokeWidth="6"/>
            <path d="m786 458-24-13-3 12z" fill="#cf4040"/>
            <path d="M703 382c25 7 42 31 47 62" stroke="#2fca3a" strokeWidth="4"/>
            <circle cx="706" cy="383" r="3.5" fill="#38d542"/>
            <circle cx="749.5" cy="440" r="4" fill="#38d542"/>
            <path d="m699 381 5 2M750 441v6" stroke="#38d542" strokeWidth="4"/>
            <path d="M694 369h7v60h-7z" fill="url(#zShaft)"/>
            <path d="m697.500 344-6.500 25c4 3 9 3 13 0z" fill="#3d3dcc"/>
            <circle cx="697" cy="433" r="8.5" fill="url(#ball)"/>

            <g className="font-['DejaVu_Sans',sans-serif] text-[10px] font-bold">
                {/* world origin */}
                <path d="M697.500 764v-26" stroke="#9c8474" strokeWidth="3"/>
                <path d="m697.500 722-4 17h7z" fill="#4973f2"/>
                <path d="m698 764 16-14" stroke="#67800d" strokeWidth="2.5"/>
                <path d="m722 744-12 6 5 5z" fill="#0a8005"/>
                <path d="m698 764 26 7" stroke="#ff4b0f" strokeWidth="2.5"/>
                <path d="m740 776-18-7 1 6z" fill="#f30d05"/>
                <circle cx="697.5" cy="764.5" r="3" fill="#8d887f"/>
                <text x="694" y="716" fill="#7e4352">Z</text>
                <text x="724" y="742" fill="#7b8d08">Y</text>
                <text x="746" y="783" fill="#ff400a">X</text>

                {/* view cube */}
                <path d="M303.500 882v-8" stroke="#1414e0" strokeWidth="2"/>
                <path d="m303.500 866-3.500 11h7z" fill="#1414e0"/>
                <path d="m319 902 8 3" stroke="#ed1c1c" strokeWidth="2"/>
                <path d="m335 908-13-6 1 6z" fill="#ed1c1c"/>
                <path d="m290 891 14-7 12 4v18l-9 8-17-4z" fill="#e8effa" stroke="#8590a4"/>
                <path d="m307 895 9-7v18l-9 8z" fill="#cbd8ec"/>
                <path d="m290 891 17 4 9-7M307 895v19" stroke="#8590a4"/>
                <ellipse cx="303.5" cy="889" rx="4" ry="3" fill="#1111d6"/>
                <circle cx="298" cy="903" r="4" fill="#0d9a18"/>
                <ellipse cx="313" cy="901" rx="3" ry="4" fill="#ed1c1c"/>
                <text x="300" y="862" fill="#2424dc">Z</text>
                <text x="315" y="889" fill="#2c8630">Y</text>
                <text x="339" y="913" fill="#ed1c1c">X</text>
            </g>
        </svg>
    );
}

function Workspace() {
    return (
        <main className="flex flex-1 flex-col bg-[#f7f7fc]">
            <div className="mb-1 ml-1 mr-[3px] mt-1 flex flex-1">
                <div className="relative flex-1 border border-[#a9a596] bg-white outline-1 -outline-offset-2 outline-[#ece9d8]">
                    <Model/>
                    <p className="relative pl-[10px] pt-[7px] text-[13px] leading-[18px] text-[#555]">ﾊﾝﾄﾞﾙをﾄﾞﾗｯｸﾞして、選択されたｵﾌﾞｼﾞｪｸﾄを移動します</p>
                    <ToolGuides/>
                    <p className="absolute bottom-3 right-4 w-[59px] border-t-2 border-[#4c4cdc] pt-0.5 text-center text-[11px] leading-3 text-[#3434c4]">20mm</p>
                </div>
            </div>
            <div className="flex h-[25px] items-start border-t border-[#7d7d82] pl-[5px] text-[12px] leading-4">
                <div className="flex h-5 items-center gap-1 border border-t-0 border-[#2d5c85] bg-white px-1 text-[#2d5c85]">
                    <FileIcon/>
                    <button className="text-[11px]">test1*</button>
                    <button aria-label="タブを閉じる"><Icon size={9}><path d="m1.500 1.500 6 6M7.500 1.500l-6 6" stroke="#222" strokeWidth="1.5"/></Icon></button>
                </div>
                <div className="ml-auto flex items-center gap-[5px] pr-1 pt-1">
                    <button aria-label="前のタブ"><Icon size={9}><path d="M6.500 1v7L3 4.500z" stroke="#333"/></Icon></button>
                    <button aria-label="次のタブ"><Icon size={9}><path d="M3 1v7l3.500-3.500z" stroke="#333"/></Icon></button>
                    <button aria-label="閉じる"><Icon size={9}><path d="m1 1 7 7M8 1 1 8" stroke="#333" strokeWidth="1.5"/></Icon></button>
                </div>
            </div>
        </main>
    );
}

function StatusBar() {
    return (
        <footer className="flex h-[31px] items-center bg-[#2d5c85] text-[10px] leading-4 text-white">
            <p className="flex-1 pl-[9px]">ﾊﾝﾄﾞﾙをﾄﾞﾗｯｸﾞして、選択されたｵﾌﾞｼﾞｪｸﾄを移動します</p>
            <span className="h-6 w-[151px] border-l-2 border-[#5d82a3]"></span>
            <button aria-label="警告" className="flex h-6 w-16 items-center justify-end gap-1.5 border-l-2 border-[#5d82a3] pr-1.5 text-[#9fb2c3]">
                <Icon size={14}><path d="M7 1.500 13 12H1z" fill="#9fb2c3" stroke="#9fb2c3" strokeLinejoin="round"/></Icon>
                <Caret up/>
            </button>
            <span className="flex h-6 w-[100px] items-center justify-center border-l-2 border-[#5d82a3]">ﾎﾞﾃﾞｨ</span>
            <span className="flex h-6 w-[152px] items-center justify-center border-l-2 border-[#5d82a3]">1ﾎﾞﾃﾞｨ</span>
            <div className="flex w-[273px] items-center">
                <button aria-label="選択を上下" className="mr-2 flex flex-col gap-2 text-[#8a9cab]">
                    <svg width="10" height="5" viewBox="0 0 10 5"><path d="M0 5h10L5 0z" fill="currentColor"/></svg>
                    <svg width="10" height="5" viewBox="0 0 10 5"><path d="M0 0h10L5 5z" fill="currentColor"/></svg>
                </button>
                <button aria-label="選択を戻す"><Icon><path d="M10 4c5-2 7 5 1 10" stroke="#68b3f4" strokeWidth="2"/><path d="M7 3l5-3v7z" fill="#68b3f4"/><path d="M1 2v11l3-2 2 4 2-1-2-4h3z" fill="#fff" stroke="#222" strokeWidth=".7"/></Icon></button>
                <button aria-label="選択モード" className="ml-2 flex items-center gap-1"><Icon><path d="M4 2v11l3-2 2 4 2-1-2-4h3z" fill="#fff" stroke="#333"/></Icon><Caret up/></button>
                <button aria-label="範囲選択" className="ml-2 flex items-center gap-1.5"><Icon><path d="M1 2.500h14v11H1z" stroke="#68b3f4" strokeWidth="2" strokeDasharray="3 2"/></Icon><Caret up/></button>
                <span className="ml-1.5 h-6 w-0.5 bg-[#5d82a3]"></span>
                <button aria-label="スピン" className="ml-1 flex items-center gap-1"><Icon><SpinPaths color="#68b3f4"/></Icon><Caret up/></button>
                <button aria-label="パン" className="ml-[10px]"><Icon><MovePaths color="#68b3f4"/></Icon></button>
                <button aria-label="ズーム" className="ml-2 flex items-center gap-1"><Icon><path d="m10 10 5 5" stroke="#68b3f4" strokeWidth="3"/><circle cx="7" cy="7" r="6" fill="#fff" stroke="#a8d4fa"/></Icon><Caret up/></button>
                <button aria-label="前のビュー" className="ml-2"><Icon><path d="m0 13 3-7 2 2 9-5 2 2-8 6 1 2z" fill="#68b3f4"/></Icon></button>
                <button aria-label="次のビュー" className="ml-2"><Icon><path d="m16 2-3 7-2-2-9 6-2-2 8-6-1-2z" fill="#7e93a6"/></Icon></button>
            </div>
        </footer>
    );
}

export default function App() {
    return (
        <div className="flex min-h-screen w-full flex-col overflow-hidden bg-white font-['Liberation_Sans','Noto_Sans_CJK_JP',sans-serif] text-black">
            <TitleBar/>
            <RibbonTabs/>
            <Ribbon/>
            <div className="flex flex-1">
                <aside className="flex w-60 shrink-0 flex-col border-r-2 border-[#f7f7fc] pb-[3px] pl-0.5 pt-0.5">
                    <StructurePanel/>
                    <PropertiesPanel/>
                    <OptionsPanel/>
                </aside>
                <Workspace/>
                <div className="w-[29px] bg-[#f0f0f0] pl-1.5 pt-1">
                    <button className="h-[62px] w-5 whitespace-nowrap border-r-4 border-[#c4c4c8] bg-[#f7f7fc] text-[11px] leading-4 [writing-mode:vertical-rl]">ｸｲｯｸｶﾞｲﾄﾞ</button>
                </div>
            </div>
            <StatusBar/>
        </div>
    );
}
